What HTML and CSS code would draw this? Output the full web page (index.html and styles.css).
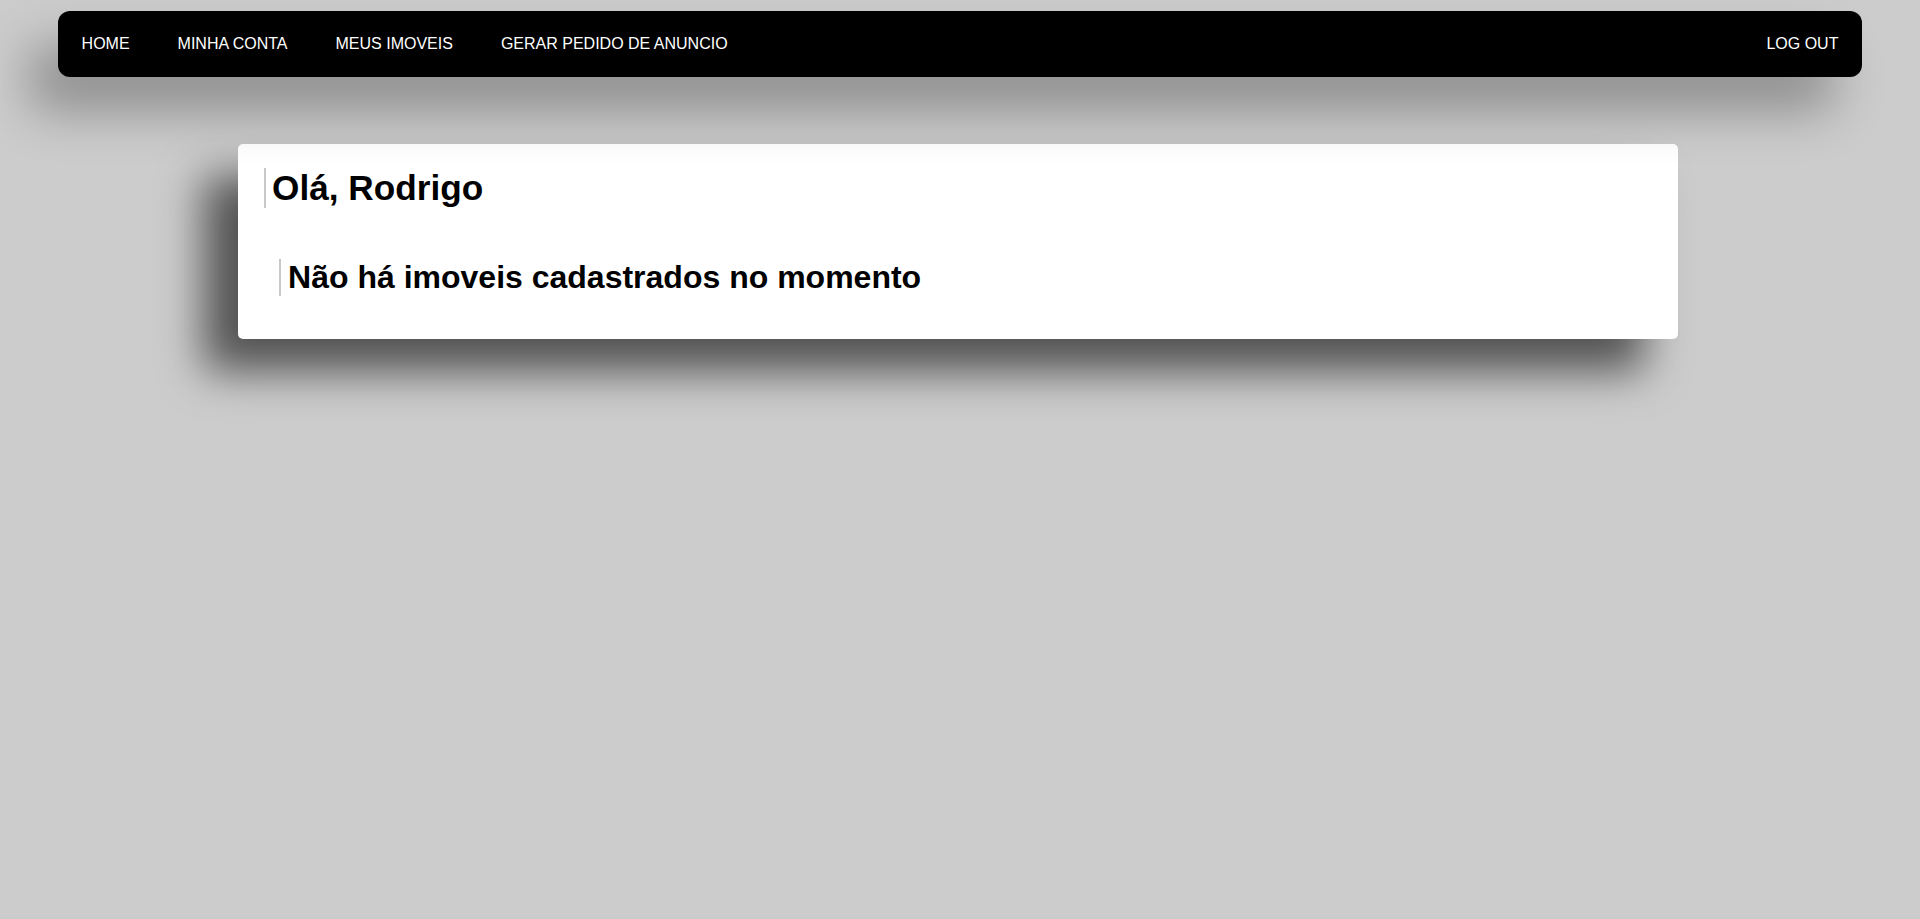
FILE: index.html
```html
<!DOCTYPE html>
<html lang="pt-BR">
<head>
<meta charset="utf-8">
<title>Minha Conta</title>
<link rel="stylesheet" href="styles.css">
</head>
<body>
<nav class="navbar">
  <a class="nav-link" href="#">HOME</a>
  <a class="nav-link" href="#">MINHA CONTA</a>
  <a class="nav-link" href="#">MEUS IMOVEIS</a>
  <a class="nav-link" href="#">GERAR PEDIDO DE ANUNCIO</a>
  <a class="nav-link nav-logout" href="#">LOG OUT</a>
</nav>
<main class="card">
  <h1 class="greeting">Olá, Rodrigo</h1>
  <h2 class="empty-msg">Não há imoveis cadastrados no momento</h2>
</main>
</body>
</html>
```

FILE: styles.css
```css
html, body {
  margin: 0;
  padding: 0;
}
body {
  background: #cccccc;
  font-family: "Liberation Sans", Arial, sans-serif;
  min-height: 919px;
}
.navbar {
  position: relative;
  z-index: 2;
  display: flex;
  align-items: center;
  height: 66px;
  margin: 11px 3% 0;
  background: #000;
  border-radius: 12px;
  box-shadow: -28px 34px 50px rgba(0, 0, 0, 0.3);
}
.nav-link {
  color: #fff;
  text-decoration: none;
  font-size: 16px;
  padding: 0 24px;
  line-height: 20px;
}
.nav-logout {
  margin-left: auto;
}
.card {
  position: relative;
  z-index: 1;
  width: 75%;
  margin: 67px 12.6% 0 12.4%;
  box-sizing: border-box;
  background: #fff;
  border-radius: 5px;
  padding: 24px 26px 43px;
  box-shadow: -34px 32px 44px rgba(0, 0, 0, 0.6);
}
.greeting {
  margin: 0;
  font-size: 35.2px;
  font-weight: bold;
  line-height: 1.149;
  border-left: 2px solid #c8c8c8;
  padding-left: 6px;
  color: #000;
}
.empty-msg {
  margin: 51px 0 0 15px;
  font-size: 32px;
  font-weight: bold;
  line-height: 1.149;
  border-left: 2px solid #c8c8c8;
  padding-left: 7px;
  color: #000;
}
```
